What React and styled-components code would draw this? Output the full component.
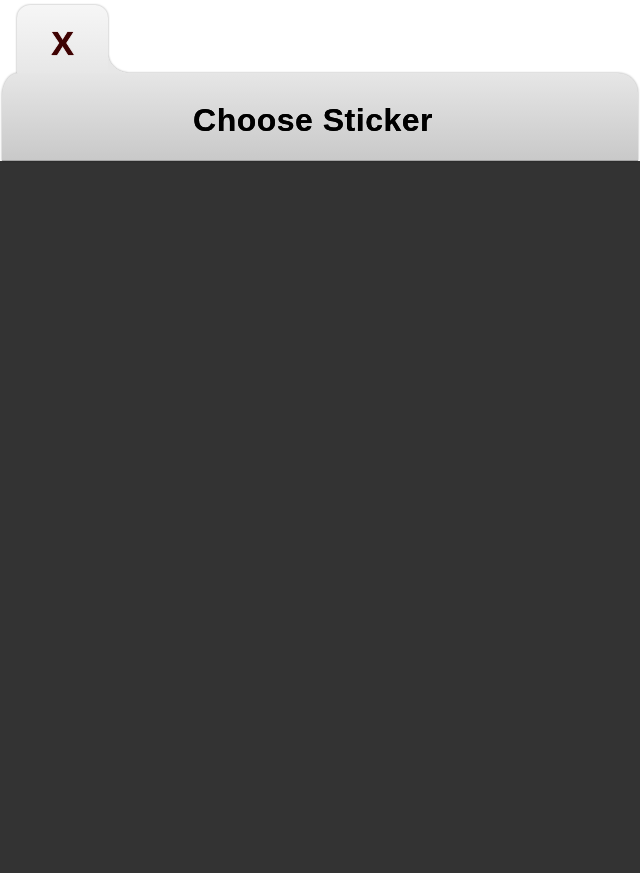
import React from "react";
import styled, { createGlobalStyle } from "styled-components";

const Global = createGlobalStyle`
  html, body { margin: 0; padding: 0; background: #ffffff; }
  #root { min-height: 100vh; }
`;

const Page = styled.div`
  display: flex;
  flex-direction: column;
  min-height: 100vh;
  font-family: "Liberation Sans", Arial, sans-serif;
`;

const Header = styled.header`
  display: flex;
  flex-direction: column;
  padding-top: 5px;
  background: #ffffff;
`;

const Chrome = styled.div`
  display: flex;
  flex-direction: column;
  filter: drop-shadow(0 0 1.2px rgba(0, 0, 0, 0.35));
`;

const TabRow = styled.div`
  display: flex;
  align-items: flex-end;
  height: 68px;
  padding-left: 17px;
`;

const Tab = styled.button`
  position: relative;
  z-index: 1;
  width: 91px;
  height: 68px;
  margin: 0;
  padding: 21px 0 0;
  border: none;
  border-radius: 13px 13px 0 0;
  background: linear-gradient(#f6f6f6, #e7e7e7);
  display: flex;
  justify-content: center;
  align-items: flex-start;
  font-family: "Liberation Sans", Arial, sans-serif;
  font-weight: bold;
  font-size: 34px;
  line-height: 34px;
  color: #3e0303;
  text-shadow: 0 0 1px rgba(90, 10, 10, 0.9), 0 0 0.5px #3e0303;
  cursor: pointer;

  &::after {
    content: "";
    position: absolute;
    left: 100%;
    bottom: 0;
    width: 22px;
    height: 19px;
    background: radial-gradient(
      ellipse 22px 19px at 100% 0,
      transparent 98%,
      #e7e7e7 100%
    );
  }
`;

const Bar = styled.div`
  height: 88px;
  margin: 0 2px;
  padding: 31px 14px 0 0;
  box-sizing: border-box;
  border-radius: 16px 20px 0 0 / 23px 20px 0 0;
  background: linear-gradient(#e6e6e6, #c9c9c9);
  border-bottom: 1px solid #a4a4a4;
  display: flex;
  justify-content: center;
  align-items: flex-start;
`;

const Title = styled.h1`
  margin: 0;
  font-family: "Liberation Sans", Arial, sans-serif;
  font-weight: bold;
  font-size: 32px;
  line-height: 32px;
  letter-spacing: 0.5px;
  color: #000000;
  text-shadow: 0 0 0.4px #000;
`;

const Content = styled.main`
  flex: 1;
  background: #333333;
`;

export default function App() {
  return (
    <>
      <Global />
      <Page>
        <Header>
          <Chrome>
            <TabRow>
              <Tab aria-label="Close">X</Tab>
            </TabRow>
            <Bar>
              <Title>Choose Sticker</Title>
            </Bar>
          </Chrome>
        </Header>
        <Content />
      </Page>
    </>
  );
}
